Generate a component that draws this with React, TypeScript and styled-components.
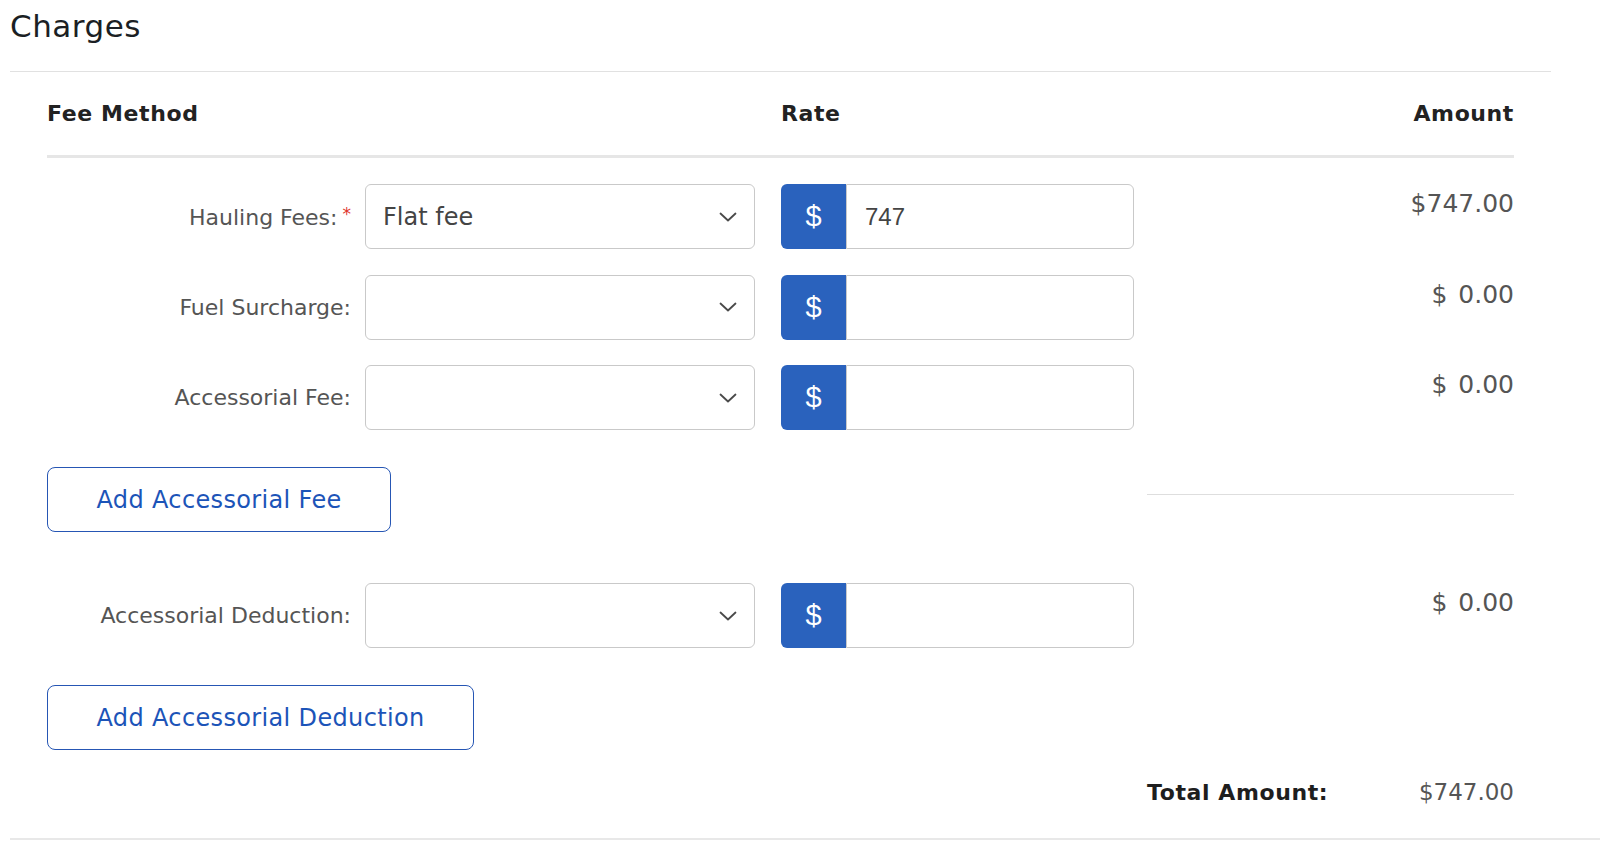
import React from "react";
import styled, { createGlobalStyle } from "styled-components";

const Global = createGlobalStyle`
  html, body { margin: 0; padding: 0; background: #ffffff; }
  body { font-family: "DejaVu Sans", "Liberation Sans", sans-serif; }
  * { box-sizing: border-box; }
`;

const Section = styled.section`
  padding-left: 10px;
  width: 1600px;
`;

const Title = styled.h2`
  margin: 0;
  padding-top: 2px;
  font-size: 31px;
  font-weight: 400;
  line-height: 48px;
  color: #1b1f24;
  letter-spacing: 0.5px;
`;

const TopRule = styled.div`
  height: 1px;
  background: #e1e1e1;
  margin: 21px 49px 0 0;
`;

const Inner = styled.div`
  padding: 0 37px;
  margin-right: 49px;
`;

const Cols = `
  display: grid;
  grid-template-columns: 305px 403px 353px 1fr;
  column-gap: 13px;
`;

const HeaderRow = styled.div`
  ${Cols};
  height: 83px;
  align-items: center;
  font-size: 22px;
  font-weight: 700;
  color: #222222;
  letter-spacing: 0.6px;
`;

const HeadCell = styled.div<{ $span?: number; $align?: string }>`
  grid-column: span ${(p) => p.$span ?? 1};
  text-align: ${(p) => p.$align ?? "left"};
`;

const HeaderRule = styled.div`
  height: 3px;
  background: #e6e6e6;
`;

const Rows = styled.div<{ $mt: number }>`
  display: flex;
  flex-direction: column;
  gap: 25.5px;
  margin-top: ${(p) => p.$mt}px;
`;

const FeeRow = styled.div`
  ${Cols};
  height: 65px;
  align-items: center;
`;

const Label = styled.div`
  text-align: right;
  font-size: 22px;
  color: #555555;
  white-space: nowrap;
  padding-right: 1px;
`;

const Required = styled.span`
  color: #e0362c;
  font-size: 17px;
  vertical-align: 5px;
  margin-left: 5px;
`;

const Select = styled.div`
  width: 390px;
  height: 65px;
  border: 1px solid #c9c9c9;
  border-radius: 6px;
  background: #fff;
  display: flex;
  align-items: center;
  justify-content: space-between;
  padding: 0 17px 0 17px;
  font-size: 24px;
  color: #444444;
`;

const RateGroup = styled.div`
  display: flex;
  height: 65px;
`;

const Prefix = styled.div`
  width: 65px;
  flex: none;
  background: #2a62bd;
  border-radius: 6px 0 0 6px;
  color: #ffffff;
  font-family: "Liberation Sans", Arial, sans-serif;
  font-size: 29px;
  display: flex;
  align-items: center;
  justify-content: center;
`;

const RateInput = styled.div`
  flex: 1;
  border: 1px solid #c9c9c9;
  border-radius: 0 6px 6px 0;
  display: flex;
  align-items: center;
  padding-left: 18px;
  font-family: "Liberation Sans", Arial, sans-serif;
  font-size: 24px;
  color: #444444;
`;

const Amount = styled.div`
  align-self: start;
  text-align: right;
  font-size: 25px;
  line-height: 40px;
  color: #555555;
  word-spacing: 3px;
`;

const ActionRow = styled.div<{ $mt: number }>`
  ${Cols};
  margin-top: ${(p) => p.$mt}px;
  height: 65px;
`;

const OutlineButton = styled.button`
  grid-column: span 3;
  justify-self: start;
  height: 65px;
  padding: 0 48.5px;
  border: 1.5px solid #2656b4;
  border-radius: 8px;
  background: #ffffff;
  color: #1c54b8;
  font-family: "DejaVu Sans", sans-serif;
  font-size: 24px;
  letter-spacing: 0.35px;
  white-space: nowrap;
  cursor: pointer;
`;

const SubRule = styled.div`
  align-self: start;
  margin-top: 27px;
  height: 1px;
  background: #dedede;
`;

const TotalRow = styled.div`
  ${Cols};
  margin-top: 22px;
  height: 40px;
  align-items: center;
`;

const TotalCell = styled.div`
  grid-column: 4;
  display: flex;
  justify-content: space-between;
  align-items: center;
`;

const TotalLabel = styled.span`
  font-size: 22px;
  font-weight: 700;
  color: #1e1e1e;
  letter-spacing: 0.6px;
`;

const TotalValue = styled.span`
  font-size: 23px;
  color: #555555;
`;

const BottomRule = styled.div`
  margin-top: 26px;
  height: 2px;
  background: #e8e8e8;
`;

const Chevron = () => (
  <svg width="18" height="10" viewBox="0 0 18 10" fill="none">
    <polyline
      points="1.5,1.5 9,8.5 16.5,1.5"
      stroke="#4a4a4a"
      strokeWidth="1.8"
      strokeLinecap="round"
      strokeLinejoin="round"
    />
  </svg>
);

type Fee = {
  label: string;
  required?: boolean;
  method?: string;
  rate?: string;
  amount: string;
};

const fees: Fee[] = [
  { label: "Hauling Fees:", required: true, method: "Flat fee", rate: "747", amount: "$747.00" },
  { label: "Fuel Surcharge:", amount: "$ 0.00" },
  { label: "Accessorial Fee:", amount: "$ 0.00" },
];

const FeeLine = ({ fee }: { fee: Fee }) => (
  <FeeRow>
    <Label>
      {fee.label}
      {fee.required && <Required>*</Required>}
    </Label>
    <Select>
      <span>{fee.method ?? ""}</span>
      <Chevron />
    </Select>
    <RateGroup>
      <Prefix>$</Prefix>
      <RateInput>{fee.rate ?? ""}</RateInput>
    </RateGroup>
    <Amount>{fee.amount}</Amount>
  </FeeRow>
);

export default function App() {
  return (
    <>
      <Global />
      <Section>
        <Title>Charges</Title>
        <TopRule />
        <Inner>
          <HeaderRow>
            <HeadCell $span={2}>Fee Method</HeadCell>
            <HeadCell>Rate</HeadCell>
            <HeadCell $align="right">Amount</HeadCell>
          </HeaderRow>
          <HeaderRule />
          <Rows $mt={26}>
            {fees.map((f) => (
              <FeeLine key={f.label} fee={f} />
            ))}
          </Rows>
          <ActionRow $mt={37}>
            <OutlineButton>Add Accessorial Fee</OutlineButton>
            <SubRule />
          </ActionRow>
          <Rows $mt={51}>
            <FeeLine fee={{ label: "Accessorial Deduction:", amount: "$ 0.00" }} />
          </Rows>
          <ActionRow $mt={37}>
            <OutlineButton>Add Accessorial Deduction</OutlineButton>
          </ActionRow>
          <TotalRow>
            <TotalCell>
              <TotalLabel>Total Amount:</TotalLabel>
              <TotalValue>$747.00</TotalValue>
            </TotalCell>
          </TotalRow>
        </Inner>
        <BottomRule />
      </Section>
    </>
  );
}
